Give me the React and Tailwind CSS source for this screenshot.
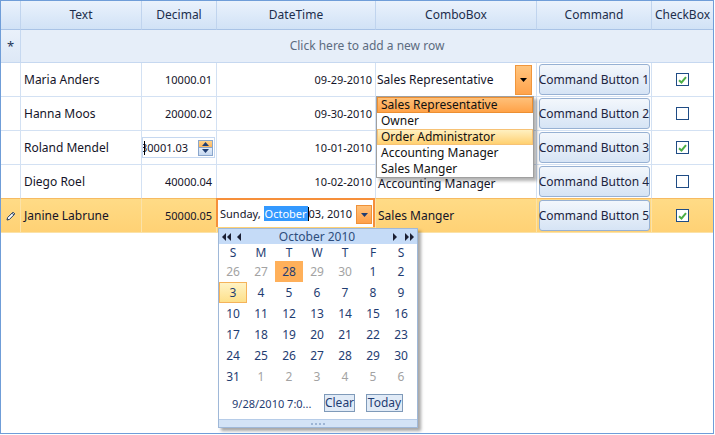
import React from "react";

const COLS = "grid grid-cols-[20px_121px_75px_159px_161px_115px_61px]";

const rows = [
  { name: "Maria Anders", dec: "10000.01", date: "09-29-2010", combo: "Sales Representative", checked: true },
  { name: "Hanna Moos", dec: "20000.02", date: "09-30-2010", combo: "", checked: false },
  { name: "Roland Mendel", dec: "30001.03", date: "10-01-2010", combo: "", checked: true },
  { name: "Diego Roel", dec: "40000.04", date: "10-02-2010", combo: "Accounting Manager", checked: false },
  { name: "Janine Labrune", dec: "50000.05", date: "10-03-2010", combo: "Sales Manger", checked: true },
];

function Check({ checked }) {
  return (
    <div className="w-[13px] h-[13px] border border-[#1f4c85] bg-white flex items-center justify-center">
      {checked && (
        <svg width="9" height="8" viewBox="0 0 9 8">
          <path d="M1 4.2 L3.5 6.5 L8 1.2" fill="none" stroke="#4cae45" strokeWidth="2" />
        </svg>
      )}
    </div>
  );
}

function Tri({ color = "#000", up = false }) {
  return (
    <svg width="7" height="4" viewBox="0 0 7 4">
      <path d={up ? "M0 4 L3.5 0 L7 4 Z" : "M0 0 L7 0 L3.5 4 Z"} fill={color} />
    </svg>
  );
}

function Arrow({ dir = "left", double = false }) {
  const one = dir === "left" ? "M4 0 L0 4 L4 8 Z" : "M0 0 L4 4 L0 8 Z";
  const two = dir === "left" ? "M4 0 L0 4 L4 8 Z M9 0 L5 4 L9 8 Z" : "M0 0 L4 4 L0 8 Z M5 0 L9 4 L5 8 Z";
  return (
    <svg width={double ? 9 : 4} height="8" viewBox={double ? "0 0 9 8" : "0 0 4 8"}>
      <path d={double ? two : one} fill="#1b1f33" />
    </svg>
  );
}

function Pencil() {
  return (
    <svg width="10" height="10" viewBox="0 0 10 10">
      <path d="M1 9 L1.6 6.6 L7 1.2 L8.8 3 L3.4 8.4 Z" fill="#fff" stroke="#1d3557" strokeWidth="1" />
      <path d="M6 2.2 L7.8 4" stroke="#1d3557" strokeWidth="1" />
    </svg>
  );
}

function Calendar() {
  const weeks = [
    [26, 27, 28, 29, 30, 1, 2],
    [3, 4, 5, 6, 7, 8, 9],
    [10, 11, 12, 13, 14, 15, 16],
    [17, 18, 19, 20, 21, 22, 23],
    [24, 25, 26, 27, 28, 29, 30],
    [31, 1, 2, 3, 4, 5, 6],
  ];
  return (
    <div className="absolute left-[217px] top-[227px] w-[200px] bg-white border border-[#9fb8d8] shadow-[3px_3px_3px_rgba(0,0,0,0.35)]">
      <div className="h-[15px] bg-[#c5dbf7] flex items-center pl-[3px] pr-[3px] text-[#2d4d7c]">
        <div className="flex items-center gap-[6px]">
          <Arrow dir="left" double />
          <Arrow dir="left" />
        </div>
        <div className="flex-1 text-center text-[12px] leading-none">October 2010</div>
        <div className="flex items-center gap-[8px]">
          <Arrow dir="right" />
          <Arrow dir="right" double />
        </div>
      </div>
      <div className="flex h-[17px] items-center text-[#1f3d72]">
        {["S", "M", "T", "W", "T", "F", "S"].map((d, i) => (
          <div key={i} className="w-[28px] text-center">{d}</div>
        ))}
      </div>
      {weeks.map((w, wi) => (
        <div key={wi} className="flex h-[21px]">
          {w.map((d, di) => {
            const other = (wi === 0 && d > 20) || (wi === 5 && d < 20);
            const today = wi === 0 && d === 28;
            const sel = wi === 1 && d === 3;
            let cls = "w-[28px] h-[21px] flex items-center justify-center ";
            if (today) cls += "bg-[#ffb05a] text-[#1f3d72]";
            else if (sel) cls += "bg-linear-to-b from-[#fff3c4] to-[#fde08a] border border-[#f5b35a] text-[#1f3d72]";
            else if (other) cls += "text-[#a3a3a3]";
            else cls += "text-[#1f3d72]";
            return (
              <div key={di} className={cls}>{d}</div>
            );
          })}
        </div>
      ))}
      <div className="h-[32px] flex items-center pl-[13px] pr-[14px] text-[#1f3d72]">
        <span className="text-[11px]">9/28/2010 7:0...</span>
        <div className="ml-auto h-[18px] w-[31px] border border-[#7f9ab9] bg-[#e1ebf7] flex items-center justify-center">Clear</div>
        <div className="ml-[11px] h-[18px] w-[37px] border border-[#7f9ab9] bg-[#e1ebf7] flex items-center justify-center">Today</div>
      </div>
      <div className="h-[8px] bg-[#d3e3f6] border-t border-[#b6cce8] flex items-center justify-center gap-[2px]">
        {[0, 1, 2, 3].map((i) => (
          <div key={i} className="w-[2px] h-[2px] bg-[#9db5d5]" />
        ))}
      </div>
    </div>
  );
}

function Dropdown() {
  const items = ["Sales Representative", "Owner", "Order Administrator", "Accounting Manager", "Sales Manger"];
  return (
    <div className="absolute left-[375px] top-[95px] w-[158px] h-[82px] bg-white border border-[#a0a0a0] shadow-[3px_3px_3px_rgba(0,0,0,0.3)]">
      {items.map((it, i) => {
        let cls = "h-[16px] flex items-center pl-[3px] text-[#111] ";
        if (i === 0) cls += "bg-linear-to-b from-[#ffc078] to-[#ffa247] border border-[#ec8f32]";
        else if (i === 2) cls += "bg-linear-to-b from-[#fff0c0] to-[#ffd06f] border border-[#f7c275]";
        else cls += "border border-transparent";
        return (
          <div key={i} className={cls}>{it}</div>
        );
      })}
    </div>
  );
}

export default function App() {
  return (
    <div
      className="relative w-[714px] h-[434px] bg-white border border-[#6f9dd8] overflow-hidden text-[12px] leading-none whitespace-nowrap"
      style={{ fontFamily: '"Segoe UI", "Noto Sans", sans-serif' }}
    >
      {/* header */}
      <div className={COLS + " text-[#1c2e4c]"}>
        {["", "Text", "Decimal", "DateTime", "ComboBox", "Command", "CheckBox"].map((h, i) => (
          <div
            key={i}
            className={
              "h-[29px] border-b border-[#a9c3e6] bg-linear-to-b from-[#eaf2fc] to-[#d1e2f6] flex items-center justify-center " +
              (i < 6 ? "border-r border-r-[#c0d4ee]" : "")
            }
          >
            {h}
          </div>
        ))}
      </div>

      {/* new row */}
      <div className="flex h-[33px] border-b border-[#c6d8f0] bg-[#e6eef9]">
        <div className="w-[20px] border-r border-[#c6d8f0] flex items-center justify-center text-[#1d3557] text-[13px] bg-linear-to-b from-[#eaf1fb] to-[#dde8f6]">
          *
        </div>
        <div className="flex-1 flex items-center justify-center text-[#5c6b80]">Click here to add a new row</div>
      </div>

      {/* data rows */}
      {rows.map((r, i) => {
        const current = i === 4;
        const line = current ? "border-[#fbe2a8]" : i === 3 ? "border-[#d3e1f3] border-b-[#f6bb62]" : "border-[#d3e1f3]";
        const cell = "h-[34px] border-r border-b flex items-center " + line;
        return (
          <div key={i} className={COLS + (current ? " bg-linear-to-b from-[#ffdb86] to-[#ffd174]" : "") + " text-[#141428]"}>
            <div className={cell + " justify-center"}>{current && <Pencil />}</div>
            <div className={cell + " pl-[3px]"}>{r.name}</div>
            <div className={cell + " justify-end pr-[4px] relative text-[11px]"}>
              {i === 2 ? (
                <div className="absolute left-0 top-[6px] w-[73px] h-[21px] bg-white border border-[#c6d8f0] flex items-center overflow-hidden">
                  <span className="w-[1px] h-[14px] bg-black absolute left-[1px]" />
                  <span className="ml-[-2px]">{r.dec}</span>
                  <div className="ml-auto mr-[1px] w-[15px] h-[16px] border border-[#8aa6cc] flex flex-col shrink-0">
                    <div className="flex-1 bg-linear-to-b from-[#ffd48a] to-[#ffb55a] flex items-center justify-center">
                      <Tri color="#1f3d72" up />
                    </div>
                    <div className="flex-1 bg-linear-to-b from-[#e3edf9] to-[#c6d8f0] border-t border-[#8aa6cc] flex items-center justify-center">
                      <Tri color="#1f3d72" />
                    </div>
                  </div>
                </div>
              ) : (
                r.dec
              )}
            </div>
            <div className={cell + " justify-end pr-[3px] relative text-[11px]"}>
              {current ? (
                <div className="absolute left-[-1px] top-[-1px] w-[159px] h-[29px] border-2 border-b-0 border-[#f68f3a] bg-white flex items-center pl-[2px] text-[12px]">
                  <span className="text-[11px]">Sunday,&nbsp;</span>
                  <span className="bg-[#3399ff] text-white px-[1px] py-[2px] text-[11px]">October</span>
                  <span className="w-[1px] h-[14px] bg-black shrink-0" />
                  <span className="text-[11px]">03, 2010</span>
                  <div className="ml-auto mr-[1px] mt-[2px] w-[16px] h-[19px] shrink-0 bg-linear-to-b from-[#ffc27a] to-[#ffa049] border border-[#ef913a] flex items-center justify-center">
                    <Tri color="#1f3d72" />
                  </div>
                </div>
              ) : (
                r.date
              )}
            </div>
            <div className={cell + " pl-[2px] relative" + (i === 3 ? " pt-[4px]" : "")}>
              {i === 0 ? (
                <div className="absolute inset-0 bg-white flex items-center pl-[1px]">
                  <span>{r.combo}</span>
                  <div className="ml-auto mr-[4px] w-[17px] h-[30px] bg-linear-to-b from-[#ffc57e] to-[#ffa34b] border border-[#f0963c] flex items-center justify-center">
                    <Tri color="#000" />
                  </div>
                </div>
              ) : (
                r.combo
              )}
            </div>
            <div className={cell + " justify-center"}>
              <div className="w-[111px] h-[31px] rounded-[3px] border border-[#97b1d3] bg-linear-to-b from-[#f3f7fc] to-[#d6e4f5] flex items-center justify-center text-[#1c2440]">
                {`Command Button ${i + 1}`}
              </div>
            </div>
            <div className={"h-[34px] border-b flex items-center justify-center " + line}>
              <Check checked={r.checked} />
            </div>
          </div>
        );
      })}

      <Dropdown />
      <Calendar />
    </div>
  );
}
